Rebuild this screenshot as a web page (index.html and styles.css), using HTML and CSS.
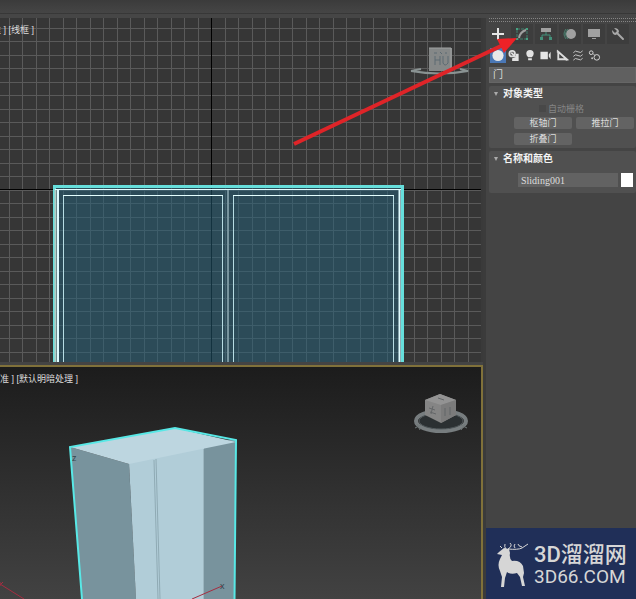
FILE: index.html
```html
<!DOCTYPE html>
<html lang="zh-CN">
<head>
<meta charset="utf-8">
<title>3D 视口</title>
<link rel="stylesheet" href="styles.css">
</head>
<body>
<header class="topbar"></header>
<main class="workspace">
  <div class="viewports">
    <section class="view view-front">
      <svg class="scene" viewBox="0 0 481 344" preserveAspectRatio="xMinYMin slice" aria-hidden="true">
        <defs>
          <pattern id="grid" x="9" y="10" width="27" height="27" patternUnits="userSpaceOnUse">
            <path d="M0 .5H27M0 13.5H27M.5 0V27M13.5 0V27" stroke="#5a5a5a" fill="none"/>
          </pattern>
        </defs>
        <rect width="481" height="344" fill="#363636"/>
        <rect width="481" height="344" fill="url(#grid)"/>
        <path d="M0 171.500H481M211.500 0V344" stroke="#000"/>
        <rect x="54" y="168" width="349" height="180" fill="#246078" fill-opacity=".52"/>
        <path d="M54.500 348V168.500H402.500V348" fill="none" stroke="#66dfdc" stroke-width="3"/>
        <path d="M55.500 344V171" stroke="#b5cdc4" stroke-width="2"/>
        <path d="M55 171.500H401" stroke="#dffcff"/>
        <path d="M58 344V172M399.500 344V172" stroke="#dffcff" stroke-width="2"/>
        <path d="M63.500 344V177.500H222.500V344M233.500 344V177.500H393.500V344" fill="none" stroke="#b7dce3"/>
        <path d="M63 177.500H223M233 177.500H394" stroke="#e5ffff"/>
        <path d="M228 172V344" stroke="#77949e" stroke-width="2"/>
        <path d="M411 53L421 51M411 53Q440 58 468 53L460 51" fill="none" stroke="#899292" stroke-width="2"/>
        <rect x="429" y="30" width="23" height="23" fill="#858888"/>
        <path d="M429 30H451V53" fill="none" stroke="#a0a2a2"/>
        <path d="M435 38V47M435 42H440M440 38V47M443 38V45Q445 49 448 45V38M434 35H437M440 34L442 36M445 35H447" fill="none" stroke="#5c6a72"/>
      </svg>
      <p class="view-label clipped">准 ] [线框 ]</p>
    </section>
    <section class="view view-persp">
      <svg class="scene" viewBox="0 0 481 232" preserveAspectRatio="xMinYMin slice" aria-hidden="true">
        <defs>
          <linearGradient id="backdrop" x2="0" y2="1"><stop stop-color="#1c1c1c"/><stop offset="1" stop-color="#424242"/></linearGradient>
        </defs>
        <rect width="481" height="232" fill="url(#backdrop)"/>
        <path d="M70 80L129 97L136 232H82Z" fill="#78939d"/>
        <path d="M129 96L204 78V232H136Z" fill="#b1cdd8"/>
        <path d="M204 78L236 72L234 232H204Z" fill="#78939d"/>
        <path d="M70 80L175 61L236 75L129 97Z" fill="#bdd6e0"/>
        <path d="M154 93L158 232M156 92L160 232" stroke="#8faab4" fill="none"/>
        <path d="M203.500 82V232" stroke="#9cb6c0"/>
        <path d="M82 232L70 80L175 61L236 73L234.500 232" fill="none" stroke="#58e8e6" stroke-width="2"/>
        <path d="M0 217L24 232M192 232L222 219" stroke="#a52d40" fill="none"/>
        <text x="72" y="94" class="axis">z</text>
        <text x="220" y="222" class="axis">x</text>
        <path d="M0 215V219M1 217L3 215" stroke="#a52d40"/>
        <ellipse cx="441" cy="54" rx="25" ry="10" fill="none" stroke="#777d7f" stroke-width="4"/>
        <ellipse cx="441" cy="54" rx="22" ry="8" fill="#2b3032" stroke="#555d60"/>
        <path d="M415 61L421 58M417 57L420 63M461 58L467 61M461 63L465 57" stroke="#6f7778"/>
        <path d="M425 33L440 27L456 33V48L441 56L425 48Z" fill="#858585"/>
        <path d="M425 33L440 27L456 33L441 38Z" fill="#939393"/>
        <path d="M441 38L456 33V48L441 56Z" fill="#7b7b7b"/>
        <path d="M429 41L435 43M430 45L436 47M433 39L431 47M445 41V49M450 40V48M438 31L444 33" stroke="#636668" fill="none"/>
      </svg>
      <p class="view-label">准 ] [默认明暗处理 ]</p>
    </section>
  </div>
  <aside class="panel">
    <div class="grip"></div>
    <nav class="tabs">
      <button class="tab active" aria-label="创建"><svg viewBox="0 0 16 16"><path d="M8 2V14M2 8H14" stroke="#e6e6e6" stroke-width="2"/></svg></button>
      <button class="tab" aria-label="修改"><svg viewBox="0 0 16 16"><rect x="3" y="3" width="10" height="10" fill="none" stroke="#42806e" stroke-dasharray="3 1"/><path d="M2 2H4V4H2ZM12 2H14V4H12ZM2 12H4V14H2ZM12 12H14V14H12Z" fill="#46a181"/><path d="M5 12Q6 6 12 4" stroke="#a0a0a0" stroke-width="2" fill="none"/></svg></button>
      <button class="tab" aria-label="层次"><svg viewBox="0 0 16 16"><rect x="3" y="2" width="10" height="4" fill="#a0a0a0"/><path d="M8 6V9M4 12V9H12V12" stroke="#43907a" fill="none"/><path d="M2 11H5V14H2ZM11 11H14V14H11Z" fill="#43907a"/></svg></button>
      <button class="tab" aria-label="运动"><svg viewBox="0 0 16 16"><circle cx="9" cy="8" r="5" fill="#a0a0a0"/><path d="M4 3Q0 8 4 13M6 3Q1 8 6 13" stroke="#4a806f" fill="none"/></svg></button>
      <button class="tab" aria-label="显示"><svg viewBox="0 0 16 16"><rect x="2" y="3" width="12" height="8" fill="#a0a0a0"/><path d="M6 12.500H10" stroke="#a0a0a0"/></svg></button>
      <button class="tab" aria-label="实用程序"><svg viewBox="0 0 16 16"><path d="M7 7L13 13" stroke="#a8a8a8" stroke-width="2" stroke-linecap="round"/><path d="M4 2L7 5L5 7L2 4Q2 9 6 9L9 6Q9 2 4 2Z" fill="#a8a8a8"/></svg></button>
    </nav>
    <nav class="kinds">
      <button class="kind chosen" aria-label="几何体"><svg viewBox="0 0 14 14"><circle cx="7" cy="7" r="6" fill="#e8e8e8"/></svg></button>
      <button class="kind" aria-label="图形"><svg viewBox="0 0 14 14"><circle cx="5" cy="5" r="3" fill="none" stroke="#ddd" stroke-width="2"/><path d="M12 5V13H5V10L9 9V5Z" fill="#e2e2e2"/><path d="M4 4L9 9" stroke="#ddd" stroke-width="2"/></svg></button>
      <button class="kind" aria-label="灯光"><svg viewBox="0 0 14 14"><path d="M5 9Q3 7 3 5A4 4 0 0 1 11 5Q11 7 9 9ZM5 10H9V12H5Z" fill="#e2e2e2"/></svg></button>
      <button class="kind" aria-label="摄影机"><svg viewBox="0 0 14 14"><path d="M1 3H9V11H1ZM10 6L12 3V11L10 8Z" fill="#e5e5e5"/></svg></button>
      <button class="kind" aria-label="辅助对象"><svg viewBox="0 0 14 14"><path d="M3 3V11H12Z" fill="none" stroke="#ddd" stroke-width="2"/><path d="M2 1V4M11 12H13" stroke="#ddd"/></svg></button>
      <button class="kind" aria-label="空间扭曲"><svg viewBox="0 0 14 14"><path d="M2 4Q4 1 7 3T12 2M2 8Q4 5 7 7T12 6M2 12Q4 9 7 11T12 10" fill="none" stroke="#ccc"/></svg></button>
      <button class="kind" aria-label="系统"><svg viewBox="0 0 14 14"><circle cx="4" cy="4" r="2" fill="none" stroke="#ddd"/><circle cx="10" cy="9" r="3" fill="none" stroke="#ddd"/><circle cx="5" cy="10" r="1" fill="#ccc"/><path d="M6 5L8 7" stroke="#ccc"/></svg></button>
    </nav>
    <select class="category" aria-label="类别"><option>门</option></select>
    <section class="rollout">
      <h2>对象类型</h2>
      <label class="autogrid"><input type="checkbox" disabled>自动栅格</label>
      <div class="types">
        <button>枢轴门</button>
        <button>推拉门</button>
        <button>折叠门</button>
      </div>
    </section>
    <section class="rollout">
      <h2>名称和颜色</h2>
      <div class="identity">
        <input class="name" type="text" value="Sliding001" aria-label="名称">
        <button class="swatch" aria-label="颜色"></button>
      </div>
    </section>
    <footer class="brand">
      <svg class="deer" viewBox="0 0 34 46" aria-hidden="true">
        <path d="M3 10L8 6L13 7L14 11Q13 16 16 19Q24 18 27 24L28 31L27 35L29 44H26L24 35L21 31Q15 33 11 30L9 36L8 45H5L6 35L4 29Q1 23 4 17L6 13L1 12Z" fill="#d6d6d6"/>
        <path d="M10 7Q8 5 9 2M12 7Q17 4 14 1M12 7Q22 8 26 6L32 2M19 6Q17 4 19 2M26 5Q22 4 22 2M6 6L4 4" fill="none" stroke="#d6d6d6"/>
      </svg>
      <div class="brand-text"><strong>3D溜溜网</strong><span>3D66.COM</span></div>
    </footer>
  </aside>
  <svg class="pointer" viewBox="0 0 226 110" aria-hidden="true">
    <path d="M1 107L208 9" stroke="#df2428" stroke-width="4"/>
    <path d="M224 1L204 2L211 16Z" fill="#ed2227"/>
  </svg>
</main>
</body>
</html>
```
FILE: styles.css
```css
* { box-sizing: border-box; }

body {
  margin: 0;
  min-height: 100vh;
  display: flex;
  flex-direction: column;
  overflow: hidden;
  background: #444;
  color: #ddd;
  font: 10px/12px "Liberation Sans", "Noto Sans CJK SC", sans-serif;
}

button, input, select { font: inherit; color: inherit; }

button { padding: 0; border: 0; background: none; }

.topbar {
  height: 18px;
  border-bottom: 4px solid #464646;
  background: linear-gradient(#3b3b3b, #454545 90%, #303030);
}

.workspace {
  position: relative;
  flex: 1;
  display: grid;
  grid-template-columns: minmax(0, 1fr) 153px;
}

.viewports {
  display: grid;
  grid-template-rows: 344fr 234fr;
  gap: 3px;
}

.view { position: relative; overflow: hidden; }

.view-front { border-right: 2px solid #3a3a3a; }

.view-persp {
  border-top: 2px solid #80713a;
  border-right: 2px solid #80713a;
}

.scene {
  position: absolute;
  width: 100%;
  height: 100%;
}

.view-label {
  position: absolute;
  top: 6px;
  left: 0;
  margin: 0;
  font-size: 9px;
  white-space: nowrap;
}

.view-label.clipped { left: -8px; }

.axis { font: 9px "Liberation Sans", sans-serif; fill: #36454c; }

.panel {
  display: flex;
  flex-direction: column;
  padding-left: 3px;
  border-left: 3px solid #3b3b3b;
}

.grip {
  height: 4px;
  border-top: 1px dotted #858585;
  border-bottom: 1px dotted #858585;
}

.tabs { display: flex; margin: 2px 0 0 -2px; }

.tab {
  width: 24px;
  height: 20px;
  border-right: 2px solid #444;
  background: #3d3d3d;
}

.tab.active { background: #444; }

.tab svg { display: block; width: 16px; height: 16px; margin: 0 auto; }

.kinds { display: flex; margin: 4px 0; padding-left: 1px; }

.kind { width: 16px; height: 15px; padding: 1px; }

.kind svg { display: block; width: 14px; height: 13px; }

.kind.chosen { background: #4a77b5; }

.category {
  appearance: none;
  height: 16px;
  margin-bottom: 3px;
  padding: 0 3px;
  border: 1px solid #666;
  background: #606060;
}

.rollout {
  margin-bottom: 3px;
  padding: 2px 1px 3px 5px;
  border-radius: 2px;
  background: #505050;
}

h2 {
  display: flex;
  align-items: center;
  gap: 5px;
  margin: 0;
  color: #f3f3f3;
  font-size: 10px;
  line-height: 12px;
}

h2::before {
  content: "";
  border: 2px solid transparent;
  border-top: 4px solid #aaa;
  border-bottom: 0;
}

.autogrid {
  display: flex;
  align-items: center;
  justify-content: center;
  gap: 2px;
  height: 17px;
  padding-right: 6px;
  color: #858585;
  font-size: 9px;
}

.autogrid input {
  appearance: none;
  width: 7px;
  height: 7px;
  margin: 0;
  background: #484848;
}

.types {
  display: grid;
  grid-template-columns: 58px 58px;
  gap: 4px;
  padding-left: 20px;
}

.types button {
  height: 12px;
  border-radius: 2px;
  background: #636363;
  font-size: 9px;
  line-height: 12px;
}

.identity {
  display: flex;
  gap: 3px;
  padding: 8px 2px 3px 24px;
}

.name {
  flex: 1;
  min-width: 0;
  height: 14px;
  padding: 0 3px;
  border: 0;
  background: #626262;
  font-family: "Liberation Serif", serif;
}

.swatch { width: 12px; height: 14px; background: #fff; }

.brand {
  display: flex;
  gap: 4px;
  height: 71px;
  margin: auto 0 0 -3px;
  padding: 14px 8px 0 10px;
  background: #202f58;
  color: #d6d6d6;
}

.deer { width: 34px; height: 46px; }

.brand-text { white-space: nowrap; }

.brand strong {
  display: block;
  font: 500 22px/26px Roboto, "Noto Sans CJK SC", sans-serif;
}

.brand span { display: block; font: 19px/18px Roboto, sans-serif; }

.pointer {
  position: absolute;
  top: 19px;
  right: 117px;
  width: 226px;
  height: 110px;
}
```
